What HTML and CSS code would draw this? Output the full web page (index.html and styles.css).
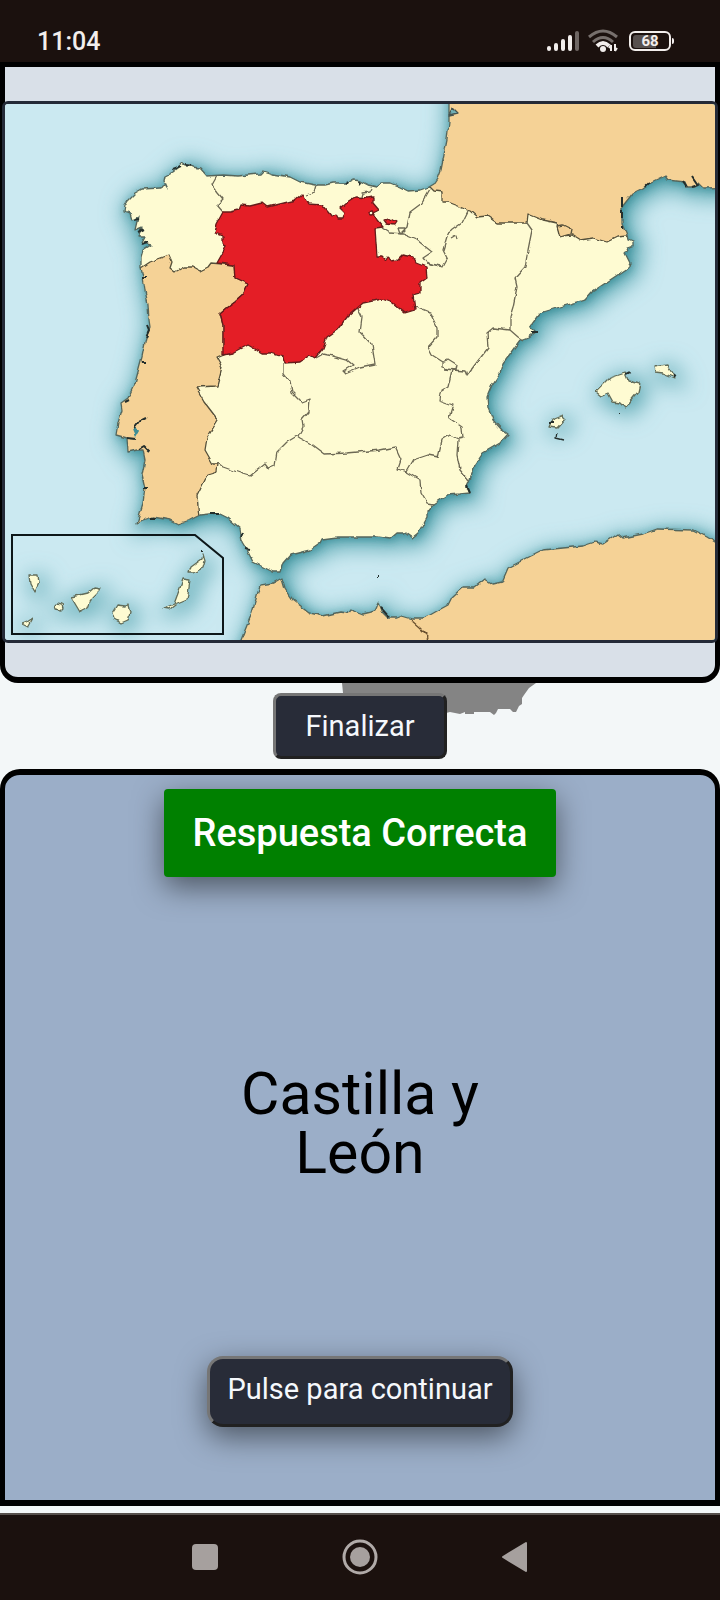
FILE: index.html
```html
<!DOCTYPE html>
<html lang="es">
<head>
<meta charset="utf-8">
<meta name="viewport" content="width=device-width, initial-scale=1">
<title>Comunidades de España</title>
<link rel="stylesheet" href="styles.css">
</head>
<body>
<header class="status">
  <time class="clock">11:04</time>
  <div class="indicators">
    <svg class="signal" viewBox="0 0 32 20" aria-hidden="true">
      <g stroke="#f2eeec" stroke-width="4" stroke-linecap="round"><path d="M2 18v-1M9 18v-4M16 18v-8M23 18v-12"/><path d="M30 18v-16" stroke="#6e6663"/></g>
    </svg>
    <svg class="wifi" viewBox="0 0 32 24" aria-hidden="true">
      <g fill="none" stroke-width="3"><path d="M1 8Q15-4 29 8M5 13Q15 4 25 13" stroke="#77706d"/><path d="M9 17Q15 11 21 17" stroke="#f2eeec" stroke-width="4"/></g>
      <circle cx="15" cy="20" r="3" fill="#f2eeec"/>
      <path d="M23 22v-6m-2 3 2-3M27 15v7m2-3-2 3" fill="none" stroke="#f2eeec" stroke-width="2"/>
    </svg>
    <span class="battery"><span class="level">68</span></span>
  </div>
</header>

<main class="game">
  <section class="board">
    <figure class="map">
      <svg class="map-art" viewBox="5 104 710 536" role="img" aria-label="Mapa de España con Castilla y León en rojo">
        <defs>
          <filter id="rough" x="0" y="0" width="100%" height="100%" color-interpolation-filters="sRGB">
            <feTurbulence type="fractalNoise" baseFrequency=".14" numOctaves="1" seed="4"/>
            <feDisplacementMap in="SourceGraphic" scale="5" xChannelSelector="R" yChannelSelector="G" result="rough"/>
            <feGaussianBlur in="rough" stdDeviation=".35"/>
          </filter>
          <filter id="halo" filterUnits="userSpaceOnUse" x="-20" y="80" width="760" height="590"><feGaussianBlur stdDeviation="11"/></filter>
          <filter id="halo-near" filterUnits="userSpaceOnUse" x="-20" y="80" width="760" height="590"><feGaussianBlur stdDeviation="5"/></filter>
          <path id="mainland" d="M449 90V122L447 140 443 160 441 170 438 178 434 184 429 187 420 190 408 191 400 187 390 183 382 183 377 187 368 185 360 181 353 180 347 183 333 183 325 185 315 185 300 182 290 177 272 174 263 171 260 174 237 176 223 175 207 176 200 168 193 167 190 164 185 165 182 163 178 168 173 172 165 176 164 181 168 190 165 185 160 188 142 189 135 193 128 200 125 205 124 211 130 213 132 220 138 217 135 230 142 227 138 237 145 237 142 243 151 245 143 250 141 257 141 268 143 277 145 290 148 305 149 320 150 327 146 337 142 357 135 383 128 398 121 403 122 410 118 423 116 435 127 438 128 452 137 450 143 450 145 460 142 475 145 488 143 503 137 523 143 520 153 517 170 520 178 524 190 520 200 515 218 513 228 518 240 528 242 542 247 550 253 562 263 567 273 572 280 572 283 563 290 555 310 550 320 543 322 539 337 537 357 537 377 537 390 539 397 533 405 533 412 538 418 533 427 517 427 512 433 504 447 495 460 494 470 493 467 487 470 480 475 465 483 453 500 443 508 434 502 430 493 420 488 408 487 397 492 385 500 373 503 363 520 340 528 337 535 332 530 327 540 313 560 307 585 300 592 292 610 280 628 268 630 263 625 253 628 252 627 248 633 246 633 242 628 240 627 235 622 223 622 207 633 193 643 188 650 183 665 176 668 180 685 182 687 187 695 187 698 183 703 188 740 187V90Z"/>
          <path id="africa" d="M239 645 252 613 260 585 273 583 282 578 285 588 293 600 310 613 323 616 340 612 347 613 350 609 363 614 375 611 379 602 382 612 388 618 397 618 402 616 412 619 423 619 437 611 448 605 452 597 463 587 475 587 485 579 493 584 502 582 508 568 527 558 543 550 583 546 595 542 603 544 618 534 623 538 643 534 657 529 693 530 707 537 715 542H740V660H233Z"/>
          <path id="islands" d="M596 392 610 378 625 373 628 380 640 383 638 392 625 408 620 403 613 402 608 393 601 396ZM654 367 667 365 675 378 663 373 655 372ZM549 427 552 420 562 416 565 419 557 428ZM29 576 38 576 39 583 35 592 30 583ZM22 624 27 622 33 618 28 627ZM54 606 57 603 62 604 63 608 60 611 55 610ZM71 597 88 593 95 587 101 588 92 597 88 608 80 612ZM117 605 125 606 128 605 130 613 128 620 121 623 114 619 112 613ZM183 579 190 580 187 600 175 605 170 609 164 608 174 604 180 588ZM189 573 191 567 202 559 203 554 205 561 203 568 193 573Z"/>
          <clipPath id="land"><use href="#mainland"/></clipPath>
        </defs>
        <rect x="0" y="90" width="740" height="570" fill="#cbe9f1"/>
        <g fill="#58a6b0" filter="url(#halo)" transform="translate(4 4)">
          <use href="#mainland" stroke="#58a6b0" stroke-width="12"/><use href="#africa" stroke="#58a6b0" stroke-width="9"/><use href="#islands" stroke="#58a6b0" stroke-width="8"/>
        </g>
        <g fill="#277f89" opacity=".65" filter="url(#halo-near)" transform="translate(2 2)"><use href="#mainland"/><use href="#africa"/></g>
        <g filter="url(#rough)" stroke-linejoin="round" stroke-width="1.3">
          <use href="#mainland" fill="#fefbd2"/>
          <g clip-path="url(#land)" fill="#f5d296" stroke="#55503b">
            <path d="M100 268H141L150 262 158 259 169 255 172 262 170 268 175 272 184 267 193 267 200 271 208 267 211 263 234 265 235 278 248 284 243 295 235 302 227 308 220 314 223 325 223 345 224 355 217 358 222 367 217 386 196 387 205 403 218 420 207 438 205 450 213 464 218 464 217 472 207 475 197 495 200 530H100Z"/>
            <path d="M420 80V187H430L434 191 442 192 442 202 447 202 470 211 477 217 487 216 497 223 527 223 528 214 543 220 557 223 560 236 572 235 580 240 593 238 607 242 617 237 627 236 760 240V80Z"/>
            <path d="M557 226 563 225 571 229 570 234 560 237Z"/>
          </g>
          <g fill="none" stroke="#6d6955">
            <path d="M217 176 212 185 218 193 223 199 217 205 223 212M317 185 315 192 306 195M372 188 370 192 362 193 361 197M430 189 422 203 410 212 407 227 400 234 398 228 405 228M382 228 390 233 403 234 417 240 432 252 423 258 427 263 440 266"/>
            <path d="M468 211 462 223 448 233 443 250 447 258 442 267 427 262M451 239 456 236 457 240M527 223 532 230 528 250 525 267 515 278 517 287 513 307 510 317 510 330 493 328 487 333 488 348 475 365 467 376 465 371 452 370M510 330 518 337 523 340"/>
            <path d="M415 307 430 313 437 327 437 337 428 347 432 355 443 362 443 367 452 370 448 387 440 392 439 400 453 405 449 418 462 427 463 438 458 439 450 435 442 440 438 457 428 455 413 460 406 472 420 480 421 493 427 503 433 504M443 362 448 360 456 365 455 370 445 369M458 440 457 455 460 470 469 481"/>
            <path d="M406 472 398 469 401 460 395 447 380 450 347 453 325 454 313 445 300 438 297 436 287 442 277 452 275 465 268 468 265 464 250 476 240 473 223 467 218 463M283 363 283 373 290 382 292 392 302 402 310 399 309 412 302 420 303 427 298 436"/>
            <path d="M357 307 362 317 360 332 372 345 375 364 360 367 345 373 343 371 353 365 347 360 333 356 323 354 316 358"/>
          </g>
          <path d="M223 212 230 212 238 210 240 205 250 206 262 203 267 207 283 203 295 200 302 194 308 204 322 205 328 212 332 217 336 215 338 219 343 219 345 213 340 208 347 202 355 197 368 198 373 197 373 203 379 210 373 213 377 220 383 227 375 228 376 243 377 257 382 257 385 260 387 257 392 261 397 260 402 255 413 257 416 263 426 267 427 278 420 283 420 293 413 295 415 310 405 313 393 303 382 299 363 303 347 317 337 330 327 337 323 348 315 358 310 355 300 362 285 363 283 357 270 353 262 353 248 345 233 353 223 355 223 325 220 314 227 308 235 302 243 295 248 284 235 278 234 265 217 263 226 247 223 243 223 236 215 233 217 223Z" fill="#e41e26" stroke="#641c1b"/>
          <path d="M384 220 389 218 396 222 394 225 387 224Z" fill="#e41e26" stroke="#641c1b"/>
          <circle cx="371" cy="213" r="2" fill="#fefbd2" stroke="#641c1b"/>
          <use href="#mainland" fill="none" stroke="#55665c"/>
          <use href="#africa" fill="#f5d296" stroke="#55665c"/>
          <path d="M411 620 420 628 429 637 427 642" fill="none" stroke="#6a5130"/>
          <use href="#islands" fill="#fefbd2" stroke="#626c59"/>
          <path d="M135 437 132 430 135 426 138 432Z" fill="#3e8d95"/>
          <path d="M449 115 453 108 458 113Z" fill="#70afb6" stroke="#45534f"/>
          <g fill="none" stroke="#252f2c" stroke-width="2">
            <path d="M134 428 140 420 146 417M127 438 136 439M139 449 144 446 150 452M142 278H147M146 337 149 330 147 325M142 362H146M125 402 129 400M144 488H147M151 518H156M210 513H219M243 532 241 537M245 549 250 550M134 220 138 219M138 232 144 229M141 245 148 242M173 169 181 166M185 164 190 165"/>
            <path d="M622 198V207M622 209V218M622 225V228M645 187 650 182M683 181 687 187M692 187 698 185 692 176M346 183 349 181M358 181 361 184M381 608 389 617M531 332 537 332M618 413H620M626 374 630 372M673 374 675 377M549 423H553M377 577H378M202 550V552M467 486 470 493"/>
            <path d="M557 432 556 438 564 440" stroke-width="1.3"/>
          </g>
        </g>
        <path d="M12 535H195L223 558V634H12Z" fill="none" stroke="#0d1719" stroke-width="2"/>
      </svg>
    </figure>
  </section>

  <div class="actions">
    <svg class="silhouette" viewBox="0 0 194 34" aria-hidden="true"><path d="M0 0H194L187 5 182 12 180 15V21L177 23 174 29H171L168 26H156L154 30 152 32 148 29H132V31H123V29L118 31 108 29 100 31H3V10H1Z" fill="#848484"/></svg>
    <button class="btn finish" type="button">Finalizar</button>
  </div>

  <section class="answer">
    <p class="result" role="status">Respuesta Correcta</p>
    <h1 class="region">Castilla y León</h1>
    <button class="btn next" type="button">Pulse para continuar</button>
  </section>
</main>

<nav class="system" aria-label="Sistema">
  <button type="button" aria-label="Recientes"><svg viewBox="0 0 40 40"><rect x="7" y="7" width="26" height="26" rx="4" fill="#a6a09e"/></svg></button>
  <button type="button" aria-label="Inicio"><svg viewBox="0 0 40 40"><circle cx="20" cy="20" r="16" fill="none" stroke="#b0aaa8" stroke-width="3"/><circle cx="20" cy="20" r="10" fill="#a6a09e"/></svg></button>
  <button type="button" aria-label="Atrás"><svg viewBox="0 0 40 40"><path d="M8 20 31 6V34Z" fill="#a6a09e" stroke="#a6a09e" stroke-width="2" stroke-linejoin="round"/></svg></button>
</nav>
</body>
</html>
```
FILE: styles.css
```css
* {
  box-sizing: border-box;
}

body {
  margin: 0;
  min-height: 100vh;
  display: flex;
  flex-direction: column;
  background: #f3f7f8;
  font-family: Roboto, "Liberation Sans", sans-serif;
}

.status {
  height: 62px;
  padding: 20px 49px 0 37px;
  display: flex;
  justify-content: space-between;
  align-items: center;
  background: #1b110e;
  color: #f2eeec;
}

.clock {
  padding-top: 2px;
  font-size: 25px;
  line-height: 40px;
  font-weight: 500;
}

.indicators {
  display: flex;
  align-items: center;
  gap: 9px;
}

.signal {
  width: 32px;
  height: 20px;
}

.wifi {
  width: 32px;
  height: 24px;
}

.battery {
  position: relative;
  width: 42px;
  height: 20px;
  padding: 2px;
  border: 2px solid #f2eeec;
  border-radius: 6px;
}

.battery::after {
  content: "";
  position: absolute;
  top: 5px;
  right: -5px;
  width: 2px;
  height: 6px;
  border-radius: 0 2px 2px 0;
  background: #f2eeec;
}

.level {
  display: block;
  border-radius: 3px;
  background: linear-gradient(90deg, #57504e 68%, transparent 68%);
  font-size: 15px;
  line-height: 13px;
  font-weight: 700;
  text-align: center;
}

.game {
  flex: 1;
  display: flex;
  flex-direction: column;
  padding-bottom: 7px;
}

.board {
  padding: 34px 0;
  border: 5px solid #000;
  border-bottom-width: 6px;
  border-radius: 0 0 18px 18px;
  background: #d9e0e8;
}

.map {
  margin: 0 -3px;
  border: 3px solid #242a37;
  border-radius: 6px;
  overflow: hidden;
}

.map-art {
  display: block;
  width: 100%;
}

.actions {
  position: relative;
  padding: 10px 0;
  display: flex;
  justify-content: center;
}

.silhouette {
  position: absolute;
  top: 0;
  left: 342px;
  width: 194px;
}

.btn {
  position: relative;
  border: 3px outset #767676;
  background: #282c38;
  color: #f5f8fc;
  font-family: inherit;
  font-size: 29px;
  line-height: 36px;
}

.finish {
  padding: 12px 30px;
  border-radius: 8px;
}

.answer {
  flex: 1;
  display: flex;
  flex-direction: column;
  align-items: center;
  justify-content: space-between;
  padding: 14px 16px 73px;
  border: 6px solid #000;
  border-width: 6px 5px;
  border-radius: 20px 20px 0 0;
  background: #9baec8;
}

.result {
  margin: 0;
  padding: 20px 28px;
  border-radius: 4px;
  background: #008000;
  color: #fff;
  font-size: 38px;
  line-height: 48px;
  font-weight: 500;
  box-shadow: 0 10px 30px rgba(0, 0, 0, .5);
}

.region {
  max-width: 300px;
  margin: 12px 0 0;
  color: #000;
  font-size: 59px;
  line-height: 59px;
  font-weight: 400;
  text-align: center;
}

.next {
  padding: 12px 17px 17px;
  border-radius: 16px;
  box-shadow: 0 10px 30px rgba(0, 0, 0, .5);
}

.system {
  height: 87px;
  padding-bottom: 2px;
  display: flex;
  justify-content: center;
  align-items: center;
  gap: 115px;
  border-top: 2px solid #57504c;
  background: #1b110e;
}

.system button {
  width: 40px;
  height: 40px;
  padding: 0;
  border: 0;
  background: none;
}

.system svg {
  display: block;
}
```
